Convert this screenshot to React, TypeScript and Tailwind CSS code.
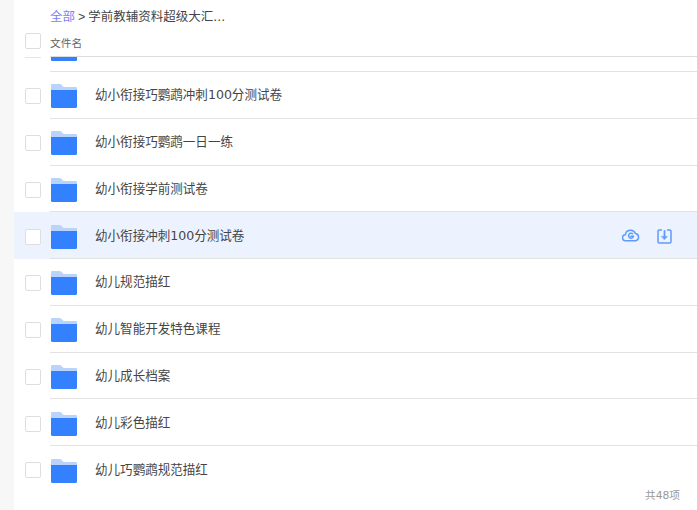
const FONT = "font-['DejaVu_Sans','Noto_Sans_CJK_SC',sans-serif]";

const names = [
  "幼小衔接巧鹦鹉冲刺100分测试卷",
  "幼小衔接巧鹦鹉一日一练",
  "幼小衔接学前测试卷",
  "幼小衔接冲刺100分测试卷",
  "幼儿规范描红",
  "幼儿智能开发特色课程",
  "幼儿成长档案",
  "幼儿彩色描红",
  "幼儿巧鹦鹉规范描红",
];

function Folder() {
  return (
    <svg width="28" height="25" viewBox="0 0 28 25" className="shrink-0 block">
      <path d="M1 2.200C1 1.500 1.500 1 2.200 1h7.600c.5 0 .9.2 1.200.5L13.600 4h12.200c.7 0 1.200.5 1.200 1.200V8H1z" fill="#b9d3fb" />
      <path d="M1 7h26v16.800c0 .7-.5 1.200-1.200 1.200H2.200C1.500 25 1 24.500 1 23.800z" fill="#3381ff" />
    </svg>
  );
}

function Checkbox() {
  return <div className="w-4 h-4 shrink-0 rounded-[2px] border border-[#dedede] bg-white" />;
}

function CloudIcon() {
  return (
    <svg width="18" height="14" viewBox="0 0 18 14" fill="none" stroke="#5f9bfb" strokeWidth="1.5" strokeLinecap="round" strokeLinejoin="round" className="-mt-[2px]">
      <path d="M4.200 12.800H3.800a3 3 0 0 1-.5-6A5.300 5.300 0 0 1 13.400 5.400a3.800 3.800 0 0 1 .4 7.400h-9.600z" />
      <path d="M11.500 8.200a2.500 2.500 0 1 1-1-2.600" />
      <path d="M11.300 8.200H8.900" />
    </svg>
  );
}

function DownloadIcon() {
  return (
    <svg width="15" height="15" viewBox="0 0 15 15" fill="none" stroke="#5f9bfb" strokeWidth="1.5" strokeLinecap="round" strokeLinejoin="round">
      <path d="M4.500 1H2.300C1.600 1 1 1.600 1 2.300v10.400c0 .7.600 1.300 1.300 1.300h10.400c.7 0 1.300-.6 1.300-1.300V2.300C14 1.600 13.400 1 12.700 1h-2.200" />
      <path d="M7.500 2v6.500" strokeWidth="1.800" />
      <path d="M4.700 7.400h5.600L7.500 10.500z" fill="#5f9bfb" strokeWidth="0.600" />
    </svg>
  );
}

function Row({ name, active, last }: { name: string; active: boolean; last: boolean }) {
  return (
    <div className={`flex items-stretch h-[46.75px] pl-[11px] ${active ? "bg-[#edf3fe]" : ""}`}>
      <div className="flex items-center pt-[2px]">
        <Checkbox />
      </div>
      <div className={`flex items-center flex-1 ml-[9px] pt-[2px] ${last ? "" : "border-b border-[#e2e2e2]"}`}>
        <Folder />
        <span className="ml-[17px] flex-1 text-[12.550px] text-[#454545]">{name}</span>
        {active && (
          <div className="flex items-center gap-[17px] pr-[25px]">
            <CloudIcon />
            <DownloadIcon />
          </div>
        )}
      </div>
    </div>
  );
}

export default function App() {
  return (
    <div className={`${FONT} flex w-[697px] h-[510px] overflow-hidden bg-[#f7f7f7]`}>
      <div className="w-[14px] shrink-0" />
      <div className="flex-1 flex flex-col bg-white">
        <div className="h-[33px] pl-9 flex items-center pt-[1px] text-[12.500px] text-[#454545]">
          <span className="text-[#7a7ef7]">全部</span>
          <span className="mx-[3px] font-['Liberation_Sans']">&gt;</span>
          <span>学前教辅资料超级大汇...</span>
        </div>
        <div className="flex items-start h-[24px] pl-[11px]">
          <Checkbox />
          <div className="flex-1 ml-[9px] h-full flex items-start pt-[3px] border-b border-[#dcdcdc] text-[10.700px] text-[#666666]">
            文件名
          </div>
        </div>
        <div className="flex pl-[11px] h-[15px]">
          <div className="w-4 h-[1px] bg-[#e5e5e5]" />
          <div className="flex-1 ml-[9px] border-b border-[#e2e2e2]">
            <div className="ml-[1px] w-[26px] h-[4px] bg-[#3381ff] rounded-b-[1px]" />
          </div>
        </div>
        {names.map((n, i) => (
          <Row key={n} name={n} active={i === 3} last={i === names.length - 1} />
        ))}
        <div className="flex justify-end pr-[17px] -mt-[4px] leading-[14px] text-[10.700px] text-[#999999]">
          共48项
        </div>
      </div>
    </div>
  );
}
